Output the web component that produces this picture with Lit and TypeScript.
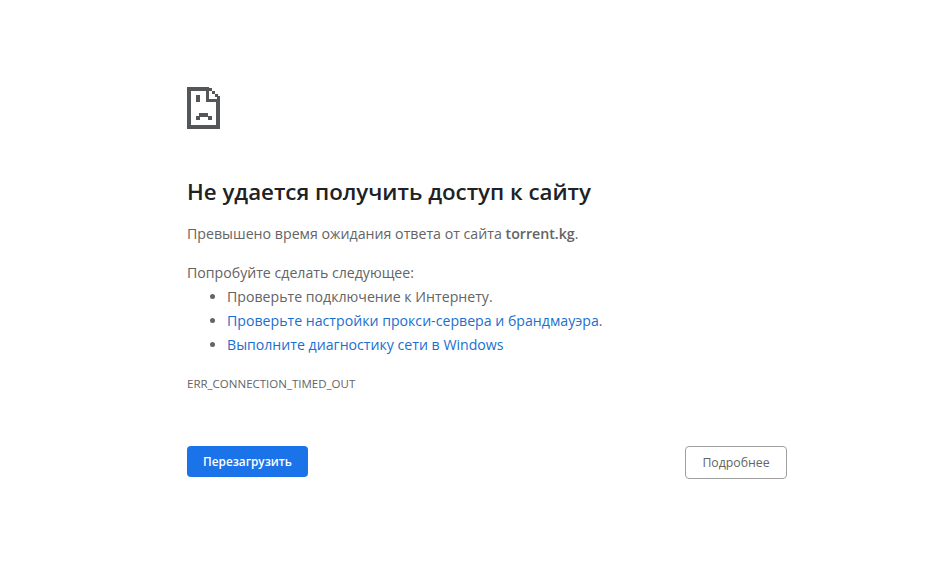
import { LitElement, html, css, svg } from "lit";
import { customElement } from "lit/decorators.js";

const rects: [number, number, number, number][] = [
  [187, 87, 22, 4], [187, 87, 4, 42], [187, 125, 33, 4], [216, 99, 4, 30],
  [206, 87, 3, 15], [206, 99, 14, 3],
  [209, 88, 3, 3], [212, 91, 3, 3], [215, 94, 3, 3], [217, 96, 3, 4],
  [196, 95, 4, 7],
  [199, 113, 9, 4], [196, 116, 4, 4], [208, 116, 4, 4],
];

@customElement("app-root")
export class AppRoot extends LitElement {
  static styles = css`
    :host { display: block; background: #fff; min-height: 580px; box-sizing: border-box;
      font-family: "Open Sans", "Noto Sans", sans-serif; color: #646464; font-size: 14.2px; }
    .wrap { width: 600px; margin-left: 187px; padding-top: 87px; }
    .icon { display: block; width: 33px; height: 42px; shape-rendering: crispEdges; }
    h1 { margin: 48px 0 0; font-size: 22.3px; line-height: 30px; font-weight: 600; color: #202124; }
    .p { margin: 17px 0 0; line-height: 20px; }
    .p b { font-weight: 600; }
    .try { margin: 19px 0 0; line-height: 20px; font-size: 14.15px; }
    ul { margin: 2px 0 0; padding: 0 0 0 40px; font-size: 14.15px; }
    li { line-height: 24px; }
    a { color: #1a6fd0; text-decoration: none; }
    .code { margin-top: 19px; font-size: 11.5px; line-height: 16px; }
    .btns { display: flex; justify-content: space-between; align-items: flex-start; margin-top: 54px; }
    button { font-family: inherit; box-sizing: border-box; border-radius: 4px; }
    .reload { width: 121px; height: 31px; padding: 0 0 2px; background: #1a73e8; color: #fff; border: 0; font-size: 11.8px; font-weight: 600; }
    .more { width: 102px; height: 33px; background: #fff; color: #646464; border: 1px solid #a0a0a0; font-size: 12.3px; font-weight: 400; }
  `;
  render() {
    return html`<div class="wrap">
      <svg class="icon" viewBox="187 87 33 42" aria-hidden="true">
        ${rects.map(([x, y, w, h]) => svg`<rect x=${x} y=${y} width=${w} height=${h} fill="#54575a"></rect>`)}
      </svg>
      <h1>Не удается получить доступ к сайту</h1>
      <p class="p">Превышено время ожидания ответа от сайта <b>torrent.kg</b>.</p>
      <p class="try">Попробуйте сделать следующее:</p>
      <ul>
        <li>Проверьте подключение к Интернету.</li>
        <li><a href="#">Проверьте настройки прокси-сервера и брандмауэра</a>.</li>
        <li><a href="#">Выполните диагностику сети в Windows</a></li>
      </ul>
      <div class="code">ERR_CONNECTION_TIMED_OUT</div>
      <div class="btns">
        <button class="reload">Перезагрузить</button>
        <button class="more">Подробнее</button>
      </div>
    </div>`;
  }
}
